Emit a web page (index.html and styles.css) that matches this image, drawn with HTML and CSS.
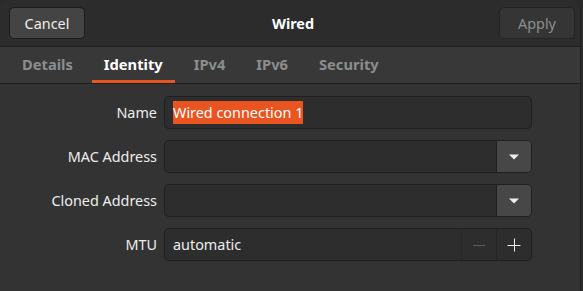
FILE: index.html
```html
<!DOCTYPE html>
<html lang="en">
<head>
    <meta charset="UTF-8">
    <title>Wired</title>
    <link rel="stylesheet" href="styles.css">
</head>
<body>
    <div class="window">
        <header class="headerbar">
            <button class="btn">Cancel</button>
            <div class="title">Wired</div>
            <button class="btn btn-disabled">Apply</button>
        </header>

        <nav class="tabs">
            <span class="tab">Details</span>
            <span class="tab active">Identity</span>
            <span class="tab">IPv4</span>
            <span class="tab">IPv6</span>
            <span class="tab">Security</span>
        </nav>

        <div class="content">
            <div class="row">
                <label>Name</label>
                <div class="field">
                    <span class="value"><span class="selected">Wired connection 1</span></span>
                </div>
            </div>
            <div class="row">
                <label>MAC Address</label>
                <div class="field">
                    <span class="value"></span>
                    <span class="drop">
                        <svg width="12" height="8" viewBox="0 0 12 8"><path d="M1 1.5h10L6 6.5z" fill="#eeeeec"/></svg>
                    </span>
                </div>
            </div>
            <div class="row">
                <label>Cloned Address</label>
                <div class="field">
                    <span class="value"></span>
                    <span class="drop">
                        <svg width="12" height="8" viewBox="0 0 12 8"><path d="M1 1.5h10L6 6.5z" fill="#eeeeec"/></svg>
                    </span>
                </div>
            </div>
            <div class="row">
                <label>MTU</label>
                <div class="field">
                    <span class="value">automatic</span>
                    <span class="spin dim">
                        <svg width="14" height="14" viewBox="0 0 14 14"><path d="M1 7.5h12" stroke="#5d5d5d" stroke-width="1"/></svg>
                    </span>
                    <span class="spin">
                        <svg width="14" height="14" viewBox="0 0 14 14"><path d="M0.5 7.5h13M7.5 0.5v13" stroke="#eeeeec" stroke-width="1"/></svg>
                    </span>
                </div>
            </div>
        </div>
    </div>
</body>
</html>
```

FILE: styles.css
```css
body {
    margin: 0;
    background: #2a2a2a;
    font-family: "Noto Sans", "DejaVu Sans", sans-serif;
    font-size: 14.4px;
    color: #eeeeec;
}
.window {
    width: 580px;
    height: 291px;
    background: #333333;
    border-radius: 8px 8px 0 0;
    overflow: hidden;
    border-right: 1px solid #232323;
}
.headerbar {
    height: 46px;
    background: #2c2c2c;
    border-bottom: 1px solid #1e1e1e;
    display: flex;
    align-items: center;
    justify-content: space-between;
    padding: 0 5px 0 9px;
}
.btn {
    width: 76px;
    height: 32px;
    background: #444444;
    border: 1px solid #1c1c1c;
    border-radius: 5px;
    color: #eeeeec;
    font-family: inherit;
    font-size: 14.4px;
    padding: 0;
}
.btn-disabled {
    background: #353535;
    border-color: #242424;
    color: #8b8e8f;
}
.title {
    font-weight: bold;
    font-size: 14.4px;
    color: #ffffff;
    margin-left: 2px;
}
.tabs {
    height: 36px;
    background: #383838;
    border-bottom: 1px solid #1f1f1f;
    display: flex;
    padding-left: 10px;
}
.tab {
    padding: 0 12px;
    margin-right: 7px;
    line-height: 35px;
    font-weight: bold;
    font-size: 14.7px;
    color: #8b8e8f;
    border-bottom: 3px solid transparent;
    height: 33px;
}
.tab.active {
    color: #ffffff;
    border-bottom-color: #e95420;
}
.content {
    padding: 12px 0 0 0;
}
.row {
    display: flex;
    align-items: center;
    margin-bottom: 11px;
}
.row label {
    width: 164px;
    text-align: right;
    padding-right: 7px;
    box-sizing: border-box;
}
.field {
    width: 368px;
    height: 33px;
    box-sizing: border-box;
    background: #2d2d2d;
    border: 1px solid #1f1f1f;
    border-radius: 5px;
    display: flex;
    overflow: hidden;
}
.value {
    flex: 1;
    padding-left: 8px;
    line-height: 31px;
}
.selected {
    background: #e95420;
    color: #ffffff;
    padding: 2px 0;
}
.drop {
    width: 34px;
    background: #474747;
    border-left: 1px solid #1f1f1f;
    display: flex;
    align-items: center;
    justify-content: center;
}
.spin {
    width: 34px;
    border-left: 1px solid #262626;
    display: flex;
    align-items: center;
    justify-content: center;
}
```
